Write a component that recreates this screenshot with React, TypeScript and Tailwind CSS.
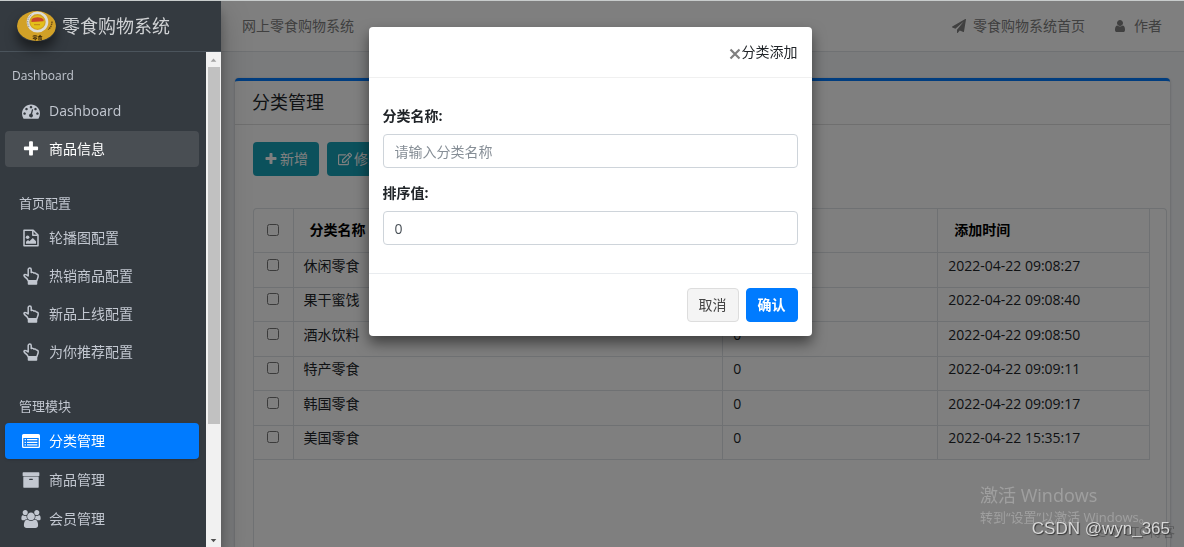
import type { ReactNode } from 'react';
import { FaRegEdit, FaTrash } from 'react-icons/fa';

function Glyph({ d, size = 1792, className }: { d: string; size?: number; className?: string }) {
  return (
    <svg viewBox={`0 0 ${size} 1792`} fill="currentColor" className={className} aria-hidden="true">
      <path d={d} />
    </svg>
  );
}

const PLUS =
  'M1600 736v192q0 40-28 68t-68 28h-416v416q0 40-28 68t-68 28h-192q-40 0-68-28t-28-68v-416h-416q-40 0-68-28t-28-68v-192q0-40 28-68t68-28h416v-416q0-40 28-68t68-28h192q40 0 68 28t28 68v416h416q40 0 68 28t28 68z';
const GAUGE =
  'M384 1152q0-53-37.5-90.5t-90.5-37.5-90.5 37.5-37.5 90.5 37.5 90.5 90.5 37.5 90.5-37.5 37.5-90.5zm192-448q0-53-37.5-90.5t-90.5-37.5-90.5 37.5-37.5 90.5 37.5 90.5 90.5 37.5 90.5-37.5 37.5-90.5zm428 481l101-382q6-26-7.5-48.5t-38.5-29.5-48 6.5-30 39.5l-101 382q-60 5-107 43.5t-63 98.5q-20 77 20 146t117 89 146-20 89-117q16-60-6-117t-72-91zm660-33q0-53-37.5-90.5t-90.5-37.5-90.5 37.5-37.5 90.5 37.5 90.5 90.5 37.5 90.5-37.5 37.5-90.5zm-640-640q0-53-37.5-90.5t-90.5-37.5-90.5 37.5-37.5 90.5 37.5 90.5 90.5 37.5 90.5-37.5 37.5-90.5zm448 192q0-53-37.5-90.5t-90.5-37.5-90.5 37.5-37.5 90.5 37.5 90.5 90.5 37.5 90.5-37.5 37.5-90.5zm320 448q0 261-141 483-19 29-54 29h-1402q-35 0-54-29-141-221-141-483 0-182 71-348t191-286 286-191 348-71 348 71 286 191 191 286 71 348z';
const ARCHIVE =
  'M1088 832q0-26-19-45t-45-19h-256q-26 0-45 19t-19 45 19 45 45 19h256q26 0 45-19t19-45zm576-192v960q0 26-19 45t-45 19h-1408q-26 0-45-19t-19-45v-960q0-26 19-45t45-19h1408q26 0 45 19t19 45zm64-448v256q0 26-19 45t-45 19h-1536q-26 0-45-19t-19-45v-256q0-26 19-45t45-19h1536q26 0 45 19t19 45z';
const USERS =
  'M593 896q-162 5-265 128h-134q-82 0-138-40.5t-56-118.5q0-353 124-353 6 0 43.5 21t97.5 42.5 119 21.5q67 0 133-23-5 37-5 66 0 139 81 256zm1071 637q0 120-73 189.5t-194 69.5h-874q-121 0-194-69.5t-73-189.5q0-53 3.5-103.5t14-109 26.5-108.5 43-97.5 62-81 85.5-53.5 111.5-20q10 0 43 21.5t73 48 107 48 135 21.5 135-21.5 107-48 73-48 43-21.5q61 0 111.5 20t85.5 53.5 62 81 43 97.5 26.5 108.5 14 109 3.5 103.5zm-1024-1277q0 106-75 181t-181 75-181-75-75-181 75-181 181-75 181 75 75 181zm704 384q0 159-112.5 271.5t-271.5 112.5-271.5-112.5-112.5-271.5 112.5-271.5 271.5-112.5 271.5 112.5 112.5 271.5zm576 225q0 78-56 118.5t-138 40.5h-134q-103-123-265-128 81-117 81-256 0-29-5-66 66 23 133 23 59 0 119-21.5t97.5-42.5 43.5-21q124 0 124 353zm-128-609q0 106-75 181t-181 75-181-75-75-181 75-181 181-75 181 75 75 181z';
const PLANE =
  'M1764 11q33 24 27 64l-256 1536q-5 29-32 45-14 8-31 8-11 0-24-5l-453-185-242 295q-18 23-49 23-13 0-22-4-19-7-30.5-23.5t-11.5-36.5v-349l864-1059-1069 925-395-162q-37-14-40-55-2-40 32-59l1664-960q15-9 32-9 20 0 36 11z';
const USER =
  'M1536 1399q0 109-62.5 187t-150.5 78h-854q-88 0-150.5-78t-62.5-187q0-85 8.5-160.5t31.5-152 58.5-131 94-89 134.5-34.5q131 128 313 128t313-128q76 0 134.5 34.5t94 89 58.5 131 31.5 152 8.5 160.5zm-256-887q0 159-112.5 271.5t-271.5 112.5-271.5-112.5-112.5-271.5 112.5-271.5 271.5-112.5 271.5 112.5 112.5 271.5z';

function HandUp() {
  return (
    <svg viewBox="0 0 16 18" className="w-4 h-[18px]" fill="none" stroke="currentColor" strokeWidth="1.5" strokeLinejoin="round" aria-hidden="true">
      <path d="M5.2 13.8C4.6 12 3.6 11 2 10C.4 9 .9 7.2 2.4 7.4C3.6 7.5 4.3 8.2 5.2 8.9V2.6C5.2.6 8.2.6 8.2 2.6V5.6C9.4 5 10.6 5.4 11 6.2C12 5.7 13 6.2 13.3 7C14.7 6.9 15.2 7.8 15.2 9C15.2 11 14 12.2 13.9 13.8Z" />
      <path fill="currentColor" d="M5.5 14.5h8v2.6h-8z" />
    </svg>
  );
}

function FileImage() {
  return (
    <svg viewBox="0 0 16 18" className="w-4 h-[18px]" fill="none" stroke="currentColor" strokeWidth="1.5" strokeLinejoin="round" aria-hidden="true">
      <path d="M1 1.2H10.2L15 6V16.8H1Z" />
      <path d="M9.8 1.5V6.2H14.8" />
      <circle cx="4.6" cy="8.2" r="1.8" fill="currentColor" stroke="none" />
      <path d="M3 14.8V12.8L5 11L6.4 12.3L9.8 9L13 12.2V14.8Z" fill="currentColor" stroke="none" />
    </svg>
  );
}

function ListAlt() {
  return (
    <svg viewBox="0 0 18 14" className="w-[18px] h-3.5" fill="currentColor" aria-hidden="true">
      <path fillRule="evenodd" d="M1.5 0h15A1.5 1.5 0 0 1 18 1.5v11a1.5 1.5 0 0 1-1.5 1.5h-15A1.5 1.5 0 0 1 0 12.5v-11A1.5 1.5 0 0 1 1.5 0zM1.3 4v8.3q0 .4.4.4h14.6q.4 0 .4-.4V4z" />
      <path d="M2.6 5.1h1.3v1.2H2.6zM5 5.1h10.4v1.2H5zM2.6 7.7h1.3v1.2H2.6zM5 7.7h10.4v1.2H5zM2.6 10.3h1.3v1.2H2.6zM5 10.3h10.4v1.2H5z" />
    </svg>
  );
}

function Logo() {
  return (
    <svg viewBox="0 0 39 30" className="w-[39px] h-[30px] rounded-full shadow-[0_8px_12px_rgba(0,0,0,0.5)]" aria-hidden="true">
      <ellipse cx="19.5" cy="15" rx="19.5" ry="15" fill="#d2a127" />
      <ellipse cx="20.5" cy="11" rx="9.5" ry="9.2" fill="none" stroke="#dcdcd8" strokeWidth="2.6" />
      <path d="M12 16C9.5 12 10.5 6 15 3.5" fill="none" stroke="#8e8f94" strokeWidth="1" strokeDasharray="1.4 1" />
      <ellipse cx="20.5" cy="11.2" rx="7" ry="6.6" fill="#e3c01b" />
      <path d="M14.5 8.6C17 5.6 24 5.6 26.6 8.4V10.2L14.4 11Z" fill="#c8452c" />
      <path d="M17 13.6h6" stroke="#c98b1b" strokeWidth="1.2" />
      <path d="M35 10.5C35 14 33.5 17 31 18.5" fill="none" stroke="#6d4c14" strokeWidth="1.4" strokeDasharray="1.5 .6" />
      <text x="20.5" y="27.5" textAnchor="middle" fontSize="5" fontWeight="700" fill="#2c1d06">零食</text>
    </svg>
  );
}

type Item = { label: string; icon: ReactNode; state?: 'open' | 'active' };

const home: Item[] = [
  { label: 'Dashboard', icon: <Glyph d={GAUGE} className="w-[18px] h-[18px]" /> },
  { label: '商品信息', icon: <Glyph d={PLUS} className="w-[18px] h-[18px]" />, state: 'open' },
];

const config: Item[] = [
  { label: '轮播图配置', icon: <FileImage /> },
  { label: '热销商品配置', icon: <HandUp /> },
  { label: '新品上线配置', icon: <HandUp /> },
  { label: '为你推荐配置', icon: <HandUp /> },
];

const manage: Item[] = [
  { label: '分类管理', icon: <ListAlt />, state: 'active' },
  { label: '商品管理', icon: <Glyph d={ARCHIVE} className="w-[18px] h-[18px]" /> },
  { label: '会员管理', icon: <Glyph d={USERS} size={1920} className="w-5 h-[18px]" /> },
];

const rows = [
  { name: '休闲零食', rank: 0, time: '2022-04-22 09:08:27' },
  { name: '果干蜜饯', rank: 0, time: '2022-04-22 09:08:40' },
  { name: '酒水饮料', rank: 0, time: '2022-04-22 09:08:50' },
  { name: '特产零食', rank: 0, time: '2022-04-22 09:09:11' },
  { name: '韩国零食', rank: 0, time: '2022-04-22 09:09:17' },
  { name: '美国零食', rank: 0, time: '2022-04-22 15:35:17' },
];

const itemStyles = {
  idle: 'text-[#c2c7d0]',
  open: 'bg-[#494e53] text-white',
  active: 'bg-[#007bff] text-white shadow',
};

function NavList({ items, className }: { items: Item[]; className: string }) {
  return (
    <ul className={`flex flex-col ${className}`}>
      {items.map((item) => (
        <li key={item.label}>
          <a href="#" className={`flex h-9 items-center rounded pl-4 gap-2 ${itemStyles[item.state ?? 'idle']}`}>
            <span className="flex w-5 justify-center">{item.icon}</span>
            <span>{item.label}</span>
          </a>
        </li>
      ))}
    </ul>
  );
}

function Sidebar() {
  return (
    <aside className="relative z-20 flex w-[221px] shrink-0 flex-col bg-[#343a40] text-[#c2c7d0] shadow-[0_14px_28px_rgba(0,0,0,0.25),0_10px_10px_rgba(0,0,0,0.22)]">
      <a href="#" className="flex h-[51px] shrink-0 items-center gap-1.5 border-b border-[#4b545c] pl-[17px] text-lg text-[#d0d2d4]">
        <Logo />
        <span>零食购物系统</span>
      </a>
      <div className="flex min-h-0 flex-1">
        <nav className="min-w-0 flex-1 overflow-hidden pl-[5px] pr-[7px]">
          <h2 className="pt-3 pb-[5px] pl-[7px] text-xs leading-6">Dashboard</h2>
          <NavList items={home} className="gap-0.5" />
          <h2 className="pt-6 pb-[5px] pl-3.5 text-[13px] leading-6">首页配置</h2>
          <NavList items={config} className="gap-0.5" />
          <h2 className="pt-6 pb-[5px] pl-3.5 text-[13px] leading-6">管理模块</h2>
          <NavList items={manage} className="gap-[3px]" />
        </nav>
        {/* Scrollbar */}
        <div className="flex w-[15px] flex-col items-center bg-[#f1f1f1]">
          <svg viewBox="0 0 16 15" className="w-[15px] h-[15px] shrink-0" aria-hidden="true">
            <path d="M5 10L8 6.5L11 10Z" fill="#a3a3a3" />
          </svg>
          <div className="w-3 flex-[359] bg-[#c1c1c1]" />
          <div className="flex-[108]" />
          <svg viewBox="0 0 16 15" className="w-[15px] h-[15px] shrink-0" aria-hidden="true">
            <path d="M5 7L8 10.5L11 7Z" fill="#505050" />
          </svg>
        </div>
      </div>
    </aside>
  );
}

function ToolButton({ icon, label }: { icon: ReactNode; label: string }) {
  return (
    <button type="button" className="flex h-[34px] items-center gap-0.5 rounded bg-[#17a2b8] px-[11px] text-white">
      {icon}
      {label}
    </button>
  );
}

function CategoryTable() {
  return (
    <div className="min-h-0 flex-1 rounded-t border border-b-0 border-[#dee2e6] pr-4">
      <table className="w-full table-fixed border-collapse text-left">
        <colgroup>
          <col className="w-[39px]" />
          <col className="w-[48%]" />
          <col className="w-[24%]" />
          <col />
        </colgroup>
        <thead>
          <tr className="h-[43px] border-b border-[#dee2e6] text-black">
            <th className="border-r border-[#dee2e6]">
              <input type="checkbox" aria-label="全选" className="mx-auto block size-3" />
            </th>
            <th className="border-r border-[#dee2e6] pl-4 font-bold">分类名称</th>
            <th className="border-r border-[#dee2e6] pl-4 font-bold">排序值</th>
            <th className="border-r border-[#dee2e6] pl-4 font-bold">添加时间</th>
          </tr>
        </thead>
        <tbody>
          {rows.map((row) => (
            <tr key={row.name} className="h-[35px] border-b border-[#dee2e6] even:h-[34px]">
              <td className="border-r border-[#dee2e6] pb-2.5">
                <input type="checkbox" aria-label={row.name} className="mx-auto block size-3" />
              </td>
              <td className="border-r border-[#dee2e6] pb-2 pl-2.5">{row.name}</td>
              <td className="border-r border-[#dee2e6] pb-2 pl-2.5">{row.rank}</td>
              <td className="border-r border-[#dee2e6] pb-2 pl-2.5">{row.time}</td>
            </tr>
          ))}
        </tbody>
      </table>
    </div>
  );
}

function Main() {
  return (
    <div className="flex min-w-0 flex-1 flex-col bg-[#f4f6f9]">
      <header className="flex h-[51px] shrink-0 items-center justify-between border-b border-[#dee2e6] bg-white pl-[21px] pr-[22px] text-[#808080]">
        <a href="#">网上零食购物系统</a>
        <nav className="flex gap-7">
          <a href="#" className="flex items-center gap-[7px]">
            <Glyph d={PLANE} className="size-3.5" />
            零食购物系统首页
          </a>
          <a href="#" className="flex items-center gap-[7px]">
            <Glyph d={USER} className="size-3.5" />
            作者
          </a>
        </nav>
      </header>

      <section className="mx-3.5 mt-[26px] flex min-h-0 flex-1 flex-col rounded-t border-t-[3px] border-[#007bff] bg-white shadow-[0_0_1px_rgba(0,0,0,0.13),0_1px_3px_rgba(0,0,0,0.2)]">
        <h1 className="border-b border-[#dfdfdf] px-[17px] py-2 text-lg leading-[27px]">分类管理</h1>
        <div className="flex min-h-0 flex-1 flex-col gap-8 pt-[17px] pl-[18px] pr-[3px]">
          <div className="flex gap-2">
            <ToolButton icon={<Glyph d={PLUS} className="size-3.5" />} label="新增" />
            <ToolButton icon={<FaRegEdit className="size-3.5" />} label="修改" />
            <ToolButton icon={<FaTrash className="size-3.5" />} label="删除" />
          </div>
          <CategoryTable />
        </div>
      </section>
    </div>
  );
}

function AddDialog() {
  return (
    <div className="fixed inset-0 z-30 flex items-start justify-center pl-4 pr-5 pt-[27px]">
      <form
        role="dialog"
        aria-labelledby="dialog-title"
        className="w-full max-w-[443px] rounded bg-white shadow-[0_7px_14px_rgba(0,0,0,0.5)]"
        onSubmit={(e) => e.preventDefault()}
      >
        <div className="flex h-[51px] items-center justify-end gap-px border-b border-[#f0f0f0] px-3.5">
          <button type="button" aria-label="关闭" className="pt-1 text-[#808080]">
            <svg viewBox="0 0 12 12" className="size-3" stroke="currentColor" strokeWidth="2.2" aria-hidden="true">
              <path d="M1.5 1.5L10.5 10.5M10.5 1.5L1.5 10.5" />
            </svg>
          </button>
          <h2 id="dialog-title">分类添加</h2>
        </div>

        <div className="flex flex-col gap-[15px] px-3.5 py-7">
          <div>
            <label htmlFor="category-name" className="mb-2 block font-bold">分类名称:</label>
            <input
              id="category-name"
              type="text"
              placeholder="请输入分类名称"
              className="h-[34px] w-full rounded border border-[#ced4da] px-[11px] placeholder:text-[#868e96]"
            />
          </div>
          <div>
            <label htmlFor="category-rank" className="mb-2 block font-bold">排序值:</label>
            <input
              id="category-rank"
              type="text"
              defaultValue="0"
              className="h-[34px] w-full rounded border border-[#ced4da] px-[11px] text-[#495057]"
            />
          </div>
        </div>

        <div className="flex justify-end gap-[7px] border-t border-[#e9ecef] p-3.5">
          <button type="button" className="h-[34px] rounded border border-[#ddd] bg-[#f4f4f4] px-[11px] text-[#444]">取消</button>
          <button type="submit" className="h-[34px] rounded border border-[#007bff] bg-[#007bff] px-[11px] font-bold text-white">确认</button>
        </div>
      </form>
    </div>
  );
}

function Watermarks() {
  return (
    <div className="pointer-events-none fixed right-0 bottom-0 z-40 h-16 w-[204px] text-white/25">
      <p className="text-lg leading-6">激活 Windows</p>
      <p className="text-[13px] leading-5 whitespace-nowrap">转到“设置”以激活 Windows。</p>
      <p className="absolute right-[9px] bottom-2 text-[13px] leading-4 text-black/25">@51CTO博客</p>
      <p className="absolute right-3.5 bottom-2 font-['Liberation_Sans',sans-serif] text-[17px] leading-5 text-[#d8d8d8] [text-shadow:1px_1px_1px_#333]">
        CSDN @wyn_365
      </p>
    </div>
  );
}

export default function App() {
  return (
    <div className="flex h-screen overflow-hidden border-t border-[#c8cccc] font-['Open_Sans','Noto_Sans_CJK_SC',sans-serif] text-sm text-[#212529]">
      <Sidebar />
      <Main />
      <div className="fixed inset-x-0 top-px bottom-0 z-10 bg-black/50" />
      <AddDialog />
      <Watermarks />
    </div>
  );
}
